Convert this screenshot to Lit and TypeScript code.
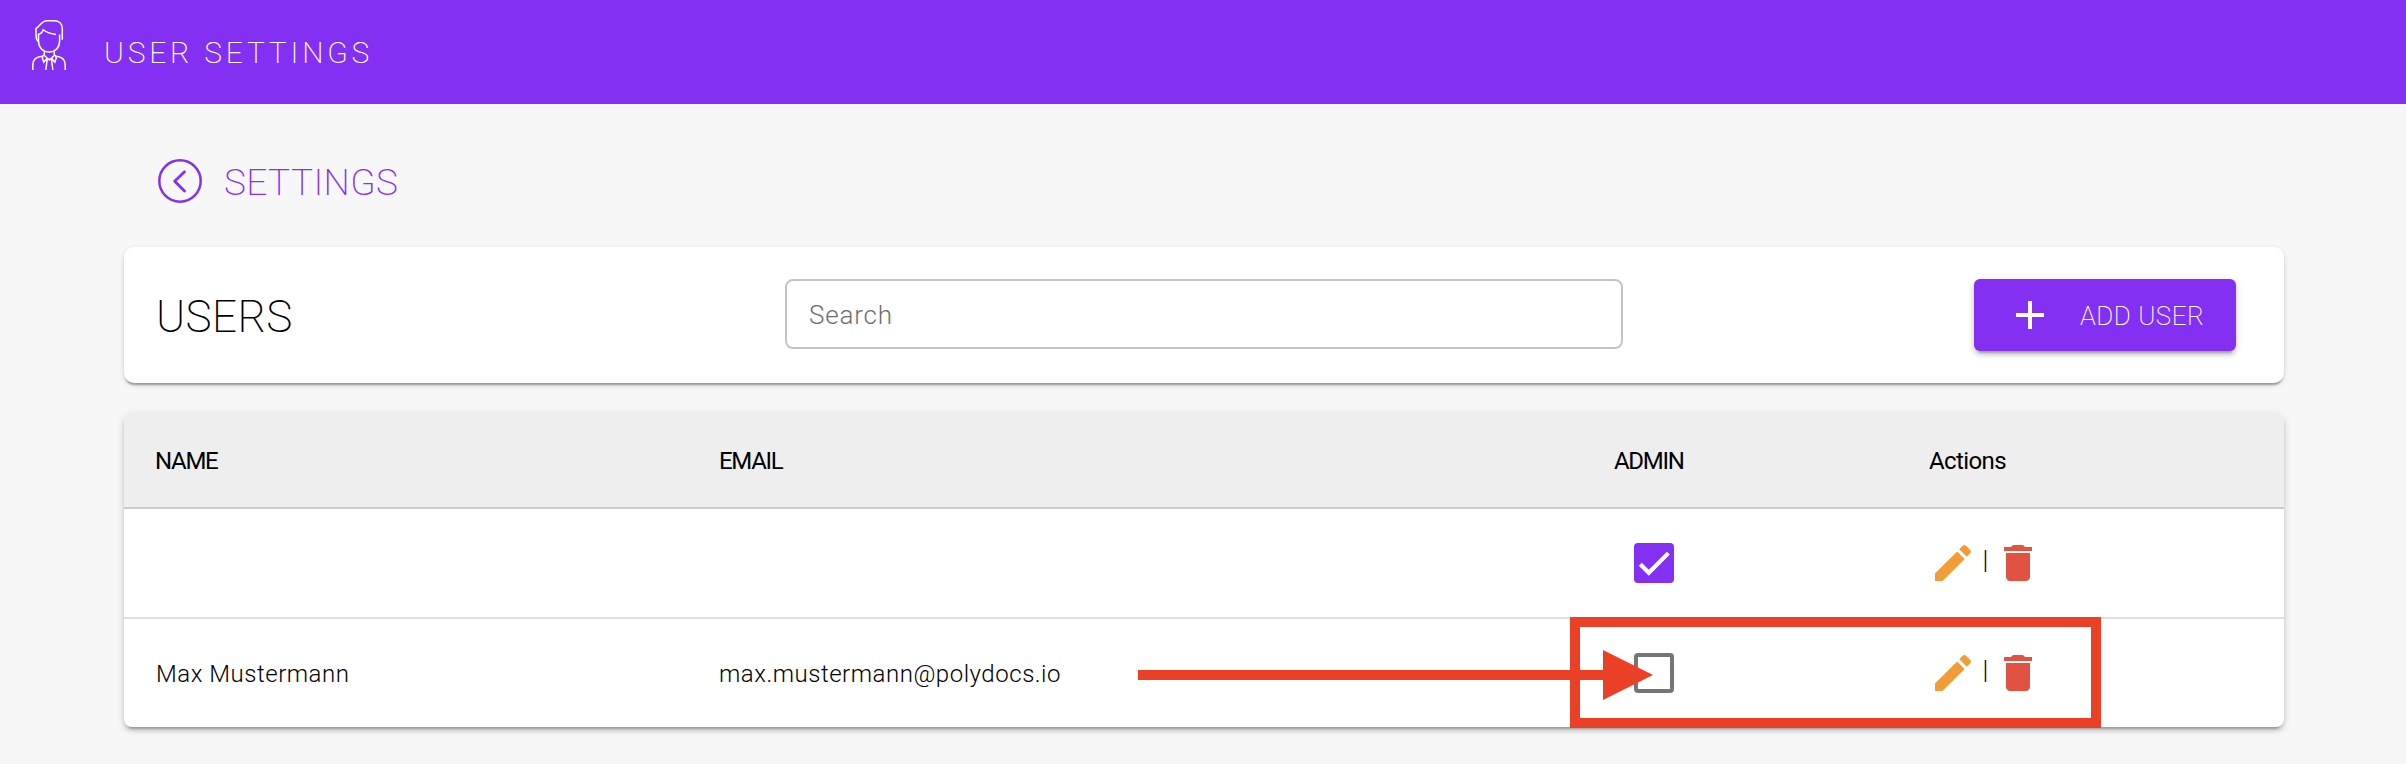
import { LitElement, html, css, svg, nothing } from "lit";
import { customElement, property } from "lit/decorators.js";

interface User {
  name: string;
  email: string;
  admin: boolean;
}

const USERS: User[] = [
  { name: "", email: "", admin: true },
  { name: "Max Mustermann", email: "max.mustermann@polydocs.io", admin: false },
];

const PATHS = {
  add: "M19 13h-6v6h-2v-6H5v-2h6V5h2v6h6v2z",
  edit: "M3 17.25V21h3.75L17.81 9.94l-3.75-3.75L3 17.25zM20.71 7.04c.39-.39.39-1.02 0-1.41l-2.34-2.34c-.39-.39-1.02-.39-1.41 0l-1.83 1.83 3.75 3.75 1.83-1.83z",
  remove: "M6 19c0 1.1.9 2 2 2h8c1.1 0 2-.9 2-2V7H6v12zM19 4h-3.5l-.71-.71c-.18-.18-.44-.29-.7-.29H9.91c-.26 0-.52.11-.7.29L8.5 4H5v2h14V4z",
};

const icon = (d: string) =>
  html`<svg width="48" height="48" viewBox="0 0 24 24" fill="currentColor">${svg`<path d=${d}></path>`}</svg>`;

@customElement("check-box")
class CheckBox extends LitElement {
  @property({ type: Boolean }) checked = false;

  static styles = css`
    :host {
      display: block;
    }
    .box {
      box-sizing: border-box;
      width: 40px;
      height: 40px;
      border: 4px solid #757575;
      border-radius: 4px;
    }
    .on {
      border-color: #8330f3;
      background: #8330f3;
    }
    svg {
      display: block;
    }
  `;

  render() {
    return html`<div class="box ${this.checked ? "on" : ""}">
      ${this.checked
        ? html`<svg width="32" height="32" viewBox="0 0 24 24" fill="none" stroke="#fff" stroke-width="3.12">
            <path d="M1.73 12.91 8.1 19.28 22.79 4.59"></path>
          </svg>`
        : nothing}
    </div>`;
  }
}

@customElement("app-root")
class AppRoot extends LitElement {
  static styles = css`
    :host {
      display: block;
      box-sizing: border-box;
      height: 764px;
      overflow: hidden;
      background: #f7f7f7;
      color: #000;
      font-family: Roboto, "Open Sans", sans-serif;
      font-weight: 300;
      font-size: 24px;
    }
    svg {
      display: block;
      flex: none;
    }
    .bar {
      display: flex;
      height: 104px;
      background: #8330f3;
      color: #fff;
    }
    .avatar {
      margin: 18px 0 0 30px;
    }
    .bar-title {
      margin-left: 36px;
      font-size: 30px;
      font-weight: 200;
      line-height: 105px;
      letter-spacing: 3.77px;
    }
    .page {
      padding: 0 122px 0 124px;
    }
    .back {
      display: flex;
      align-items: center;
      height: 143px;
      padding: 10px 0 0 33px;
      box-sizing: border-box;
      color: #8330f3;
      font-size: 37px;
      font-weight: 200;
      letter-spacing: 0.4px;
    }
    .back-text {
      margin-left: 21px;
      padding-top: 3px;
    }
    .card {
      background: #fff;
      border-radius: 10px;
      box-shadow: 0 4px 2px -2px rgba(0, 0, 0, 0.2), 0 2px 2px rgba(0, 0, 0, 0.14), 0 2px 6px rgba(0, 0, 0, 0.12);
    }
    .tools {
      display: grid;
      grid-template-columns: 661px 838px 1fr;
      height: 136px;
      padding: 32px 48px 0 0;
      box-sizing: border-box;
      align-items: start;
    }
    .title {
      padding-left: 32px;
      font-size: 44px;
      font-weight: 200;
      line-height: 76px;
      letter-spacing: 0.4px;
    }
    .search {
      box-sizing: border-box;
      width: 838px;
      height: 70px;
      padding: 2px 22px 0;
      border: 2px solid #c4c4c4;
      border-radius: 8px;
      background: #fff;
      font: inherit;
      font-size: 26px;
      letter-spacing: 0.8px;
      outline: none;
    }
    .search::placeholder {
      color: #6f6f6f;
      opacity: 1;
    }
    .add {
      display: flex;
      align-items: center;
      justify-self: end;
      width: 262px;
      height: 72px;
      padding: 0 0 0 32px;
      border: 0;
      border-radius: 6px;
      background: #8330f3;
      color: #fff;
      font: inherit;
      font-size: 26px;
      font-weight: 200;
      letter-spacing: 0.5px;
      box-shadow: 0 6px 2px -4px rgba(0, 0, 0, 0.2), 0 4px 4px rgba(0, 0, 0, 0.14), 0 2px 10px rgba(0, 0, 0, 0.12);
    }
    .add-text {
      margin-left: 26px;
      padding-top: 1px;
      white-space: nowrap;
    }
    .table {
      position: relative;
      margin-top: 30px;
      border-radius: 8px;
      box-shadow: 0 6px 2px -4px rgba(0, 0, 0, 0.2), 0 4px 4px rgba(0, 0, 0, 0.14), 0 2px 10px rgba(0, 0, 0, 0.12);
    }
    .row {
      display: grid;
      grid-template-columns: 563px 895px 315px 1fr;
      box-sizing: border-box;
      height: 110px;
      padding-left: 32px;
      align-items: center;
      border-bottom: 2px solid #e0e0e0;
      letter-spacing: 0.53px;
    }
    .row:last-of-type {
      height: 108px;
      border-bottom: 0;
    }
    .head {
      height: 96px;
      padding-left: 31px;
      padding-top: 2px;
      border-bottom-color: #ccc;
      border-radius: 8px 8px 0 0;
      background: #eee;
      font-weight: 400;
      letter-spacing: -1.3px;
    }
    .h-actions {
      padding-left: 1px;
      letter-spacing: -0.6px;
    }
    .h-email,
    .h-admin {
      padding-left: 1px;
    }
    .admin {
      padding-left: 20px;
    }
    .name,
    .email {
      padding-top: 1px;
    }
    .actions {
      display: flex;
      align-items: center;
    }
    .edit {
      color: #f29c38;
    }
    .remove {
      color: #e15241;
    }
    .sep {
      width: 17px;
      text-align: center;
      font-size: 26px;
      line-height: 30px;
      letter-spacing: 0;
      padding-bottom: 6px;
    }
    .marks {
      position: absolute;
      left: 1014px;
      top: 204px;
    }
  `;

  render() {
    return html`
      <header class="bar">
        <svg class="avatar" width="38" height="54" viewBox="0 0 38 54" fill="none" stroke="#fff" stroke-width="1.5">
          <path d="M8.2 23.3C6 21.5 6 20 6 17v-6.5c1.8-1 3-2.6 4.500-4.200C12.500 4 14 2.700 17 2.700h7c5 0 8.300 3 8.300 8V21.800"></path>
          <path d="M29.600 16.500v6.500c0 6.500-4.300 11-10.500 11S8.500 29.500 8.500 23v-6.800c2.500-.2 3.800-1.500 4.800-4.400 3.500 3 7.200 3.800 12.600 4.800"></path>
          <path d="M14.300 33.500v4l5 4.500 5-4.500v-4M13.300 37l-1 3 1.500 4.300 3-3.800M25.300 37l1 3-1.500 4.300-3-3.800M17.200 41h4.200M17.200 41l-1.400 11M21.400 41l1.500 11"></path>
          <path d="M2.800 52v-5c0-5.500 3.300-8.300 9.500-8.800M35.200 52v-5c0-5.500-3.300-8.300-9-8.800"></path>
        </svg>
        <div class="bar-title">USER SETTINGS</div>
      </header>
      <main class="page">
        <nav class="back">
          <svg width="46" height="46" viewBox="0 0 46 46" fill="none" stroke="currentColor">
            <circle cx="23" cy="23" r="20.7" stroke-width="2.5"></circle>
            <path d="M27.5 13.7 17.7 23.3l9.8 9.7" stroke-width="2.8" stroke-linecap="round" stroke-linejoin="round"></path>
          </svg>
          <span class="back-text">SETTINGS</span>
        </nav>
        <section class="card tools">
          <div class="title">USERS</div>
          <input class="search" placeholder="Search" />
          <button class="add">${icon(PATHS.add)}<span class="add-text">ADD USER</span></button>
        </section>
        <section class="card table">
          <div class="row head">
            <span class="h-name">NAME</span>
            <span class="h-email">EMAIL</span>
            <span class="h-admin">ADMIN</span>
            <span class="h-actions">Actions</span>
          </div>
          ${USERS.map(
            (u) => html`<div class="row">
              <span class="name">${u.name}</span>
              <span class="email">${u.email}</span>
              <check-box class="admin" ?checked=${u.admin}></check-box>
              <span class="actions">
                <span class="edit">${icon(PATHS.edit)}</span>
                <span class="sep">|</span>
                <span class="remove">${icon(PATHS.remove)}</span>
              </span>
            </div>`
          )}
          <svg class="marks" width="963" height="111" viewBox="0 0 963 111">
            <rect x="437" y="5" width="521" height="101" fill="none" stroke="#ea4025" stroke-width="10"></rect>
            <path d="M0 53h465V33l50 25-50 25V63H0z" fill="#ea4025"></path>
          </svg>
        </section>
      </main>
    `;
  }
}
